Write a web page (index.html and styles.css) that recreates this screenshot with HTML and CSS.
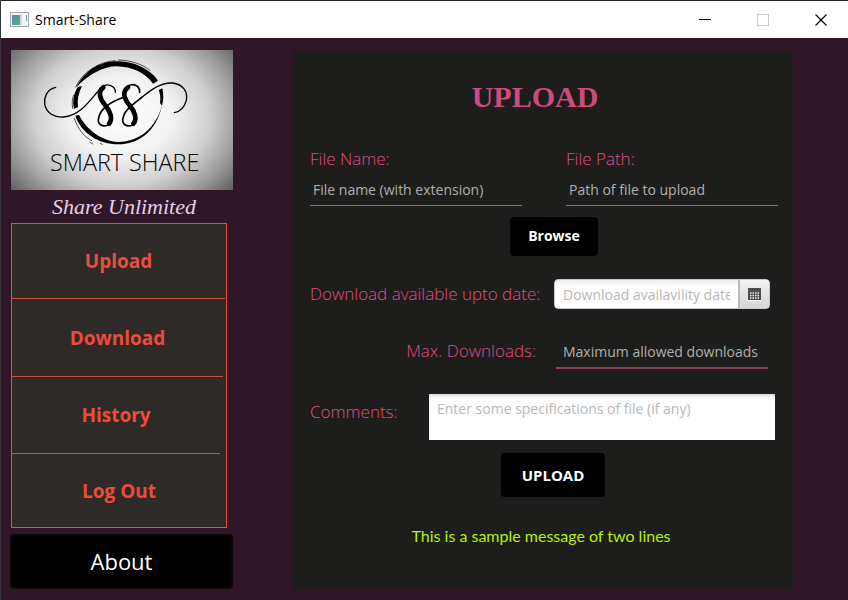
FILE: index.html
```html
<!DOCTYPE html>
<html lang="en">
<head>
<meta charset="utf-8">
<title>Smart-Share</title>
<link rel="stylesheet" href="styles.css">
</head>
<body>
<div class="window">
  <header class="titlebar">
    <svg class="app-icon" width="19" height="15" viewBox="0 0 19 15" aria-hidden="true">
      <defs>
        <linearGradient id="pane" x1="0" y1="0" x2="1" y2="1">
          <stop offset="0" stop-color="#4f87a8"/>
          <stop offset="1" stop-color="#5bb583"/>
        </linearGradient>
      </defs>
      <rect x="0.5" y="0.5" width="18" height="14" fill="#f4f5f7" stroke="#a3a9b0"/>
      <rect x="2" y="3" width="8" height="10" fill="url(#pane)"/>
      <rect x="10" y="2" width="2" height="11" fill="#d5dade"/>
      <rect x="16" y="3" width="1" height="6" fill="#62a59a"/>
    </svg>
    <span class="window-title">Smart-Share</span>
    <div class="window-controls">
      <button type="button" aria-label="Minimize"><svg width="12" height="12" viewBox="0 0 12 12"><path d="M0 5.5H12" stroke="#000"/></svg></button>
      <button type="button" aria-label="Maximize" disabled><svg width="12" height="12" viewBox="0 0 12 12"><rect x="0.5" y="0.5" width="11" height="11" fill="none" stroke="#ccc"/></svg></button>
      <button type="button" aria-label="Close"><svg width="12" height="12" viewBox="0 0 12 12"><path d="M0.5 0.5L11.5 11.5M11.5 0.5L0.5 11.5" stroke="#000" stroke-width="1.1"/></svg></button>
    </div>
  </header>
  <div class="content">
    <aside class="sidebar">
      <svg class="logo" viewBox="-72 -15 666 420" role="img" aria-label="Smart Share logo">
        <defs>
          <radialGradient id="vignette" gradientUnits="userSpaceOnUse" cx="0" cy="0" r="1" gradientTransform="translate(261 185) scale(440 345)">
            <stop offset="0" stop-color="#fff"/>
            <stop offset="0.35" stop-color="#f2f2f2"/>
            <stop offset="0.6" stop-color="#cfcfcf"/>
            <stop offset="0.8" stop-color="#9a9a9a"/>
            <stop offset="1" stop-color="#5c5c5c"/>
          </radialGradient>
        </defs>
        <rect x="-72" y="-15" width="666" height="420" fill="url(#vignette)"/>
        <g fill="#000">
          <path d="M124 98C150 42 200 18 250 19C300 20 347 44 369 77L354 86C330 52 290 35 245 34C205 34 165 58 134 86Z"/>
          <path d="M128 97C116 115 112 140 117 161L129 157C126 135 130 115 141 93Z"/>
          <path d="M121 182C137 232 190 268 250 268C318 266 364 225 381 152C362 218 315 259 250 261C200 258 155 225 132 180Z"/>
          <path d="M371 105L382 100C386 118 386 134 381 152L375 144C378 128 375 116 371 105Z"/>
        </g>
        <g fill="none" stroke="#000" stroke-linecap="round">
          <path stroke-width="2" d="M122 96C142 52 190 20 240 17M250 15C290 16 322 28 345 46M118 190C128 222 148 246 170 257M113 160C110 145 112 130 116 120M165 262L174 267M196 265L202 268"/>
          <path stroke-width="4" d="M62 97C34 103 27 128 29 148C36 177 60 188 85 186C132 183 160 143 188 110C198 94 212 87 225 91C236 95 242 102 241 112"/>
          <path stroke-width="14" d="M205 97C188 110 194 130 209 149C226 168 235 192 222 206"/>
          <path stroke-width="5" d="M220 210C202 218 186 207 191 189C196 160 225 141 268 126"/>
          <path stroke-width="14" d="M279 97C261 110 267 130 282 149C299 168 308 192 295 206"/>
          <path stroke-width="5" d="M280 93C295 83 315 93 314 112M293 210C275 218 259 207 264 189C268 163 298 147 320 127"/>
          <path stroke-width="4" d="M318 129C348 104 378 82 412 84C446 88 459 112 454 136C448 157 436 170 418 173"/>
        </g>
        <text class="logo-text" x="269" y="348" text-anchor="middle">SMART SHARE</text>
      </svg>
      <p class="tagline">Share Unlimited</p>
      <nav class="menu">
        <button type="button">Upload</button>
        <button type="button">Download</button>
        <button type="button">History</button>
        <button type="button">Log Out</button>
      </nav>
      <button type="button" class="about">About</button>
    </aside>
    <main class="panel">
      <h1>UPLOAD</h1>
      <form>
        <div class="file-fields">
          <div class="field">
            <label for="file-name">File Name:</label>
            <input class="line-input" id="file-name" type="text" placeholder="File name (with extension)">
          </div>
          <div class="field">
            <label for="file-path">File Path:</label>
            <input class="line-input" id="file-path" type="text" placeholder="Path of file to upload">
          </div>
        </div>
        <button type="button" class="browse">Browse</button>
        <div class="row date-row">
          <label for="until">Download available upto date:</label>
          <div class="date-picker">
            <input id="until" type="text" placeholder="Download availavility date">
            <button type="button" aria-label="Open calendar">
              <svg width="13" height="13" viewBox="0 0 13 13">
                <rect width="13" height="12" fill="#4c4c4c"/>
                <rect y="12" width="13" height="1" fill="#fff"/>
                <path d="M2 5H12M2 7.5H12M2 10H12" stroke="#eee" stroke-width="1.4" stroke-dasharray="1.5 1"/>
              </svg>
            </button>
          </div>
        </div>
        <div class="row max-row">
          <label for="max">Max. Downloads:</label>
          <input class="line-input" id="max" type="text" placeholder="Maximum allowed downloads">
        </div>
        <div class="row comments-row">
          <label for="comments">Comments:</label>
          <textarea id="comments" placeholder="Enter some specifications of file (if any)"></textarea>
        </div>
        <button type="submit" class="submit">UPLOAD</button>
        <p class="message" role="status">This is a sample message of two lines</p>
      </form>
    </main>
  </div>
</div>
</body>
</html>
```
FILE: styles.css
```css
* {
  box-sizing: border-box;
}

body {
  margin: 0;
  background: #301728;
  font-family: "Open Sans", "Noto Sans", sans-serif;
}

button,
input,
textarea {
  font-family: inherit;
  margin: 0;
}

button {
  padding: 0;
  border: 0;
}

h1,
p {
  margin: 0;
}

.window {
  min-height: 100vh;
  border-top: 1px solid #27272b;
  border-left: 1px solid #35353b;
}

.titlebar {
  display: flex;
  align-items: center;
  height: 37px;
  padding-left: 9px;
  overflow: hidden;
  background: #fff;
}

.window-title {
  flex: 1;
  margin-left: 6px;
  font-size: 14px;
  color: #000;
}

.window-controls {
  display: flex;
  margin-right: -2px;
}

.window-controls button {
  display: grid;
  place-items: center;
  width: 58px;
  height: 37px;
  background: none;
}

.content {
  display: flex;
  gap: 60px;
  padding: 12px 55px 12px 9px;
}

.sidebar {
  flex: none;
  width: 223px;
}

.logo {
  display: block;
  width: 222px;
  margin-left: 1px;
}

.logo-text {
  font-family: "Open Sans", sans-serif;
  font-size: 70px;
  font-weight: 300;
}

.tagline {
  padding: 6px 0 5px 5px;
  font-family: "Liberation Serif", serif;
  font-size: 22px;
  font-style: italic;
  line-height: 22px;
  text-align: center;
  color: #e6cfe0;
}

.menu {
  display: grid;
  grid-template-rows: 75px 78px 77px 73px;
  margin: 0 6px 6px 1px;
  border: 1px solid #ec4c3c;
  background: #2e2a27;
}

.menu button {
  border-bottom: 1px solid #d9483b;
  background: none;
  font-size: 19px;
  font-weight: 700;
  color: #ec4c3c;
}

.menu button:nth-child(1) {
  margin-right: 1px;
}

.menu button:nth-child(2) {
  margin-right: 3px;
}

.menu button:nth-child(3) {
  margin-right: 6px;
}

.menu button:last-child {
  border-bottom: 0;
}

.about {
  display: block;
  width: 100%;
  height: 55px;
  padding-bottom: 2px;
  border: 2px solid #0b080a;
  border-radius: 4px;
  background: #000;
  font-size: 22px;
  color: #fff;
}

.panel {
  flex: 1;
  min-width: 0;
  padding: 26px 15px 40px 17px;
  margin-top: 1px;
  background: #1d1d1b;
}

h1 {
  margin-bottom: 32px;
  padding-right: 18px;
  font-family: "Liberation Serif", serif;
  font-size: 30px;
  line-height: 40px;
  text-align: center;
  color: #cf4a7d;
}

form {
  display: flex;
  flex-direction: column;
}

label {
  font-size: 17px;
  font-weight: 300;
  line-height: 20px;
  color: #e04c87;
}

.file-fields {
  display: grid;
  grid-template-columns: 1fr 1fr;
  gap: 44px;
}

.field {
  display: flex;
  flex-direction: column;
}

.line-input {
  width: 100%;
  height: 37px;
  padding: 6px 3px 1px;
  border: 0;
  border-bottom: 1px solid #cf4a7d;
  background: none;
  font-size: 14px;
  color: #fff;
}

.line-input::placeholder {
  color: #b0b0b0;
}

.browse,
.submit {
  align-self: center;
  border-radius: 4px;
  background: #000;
  font-size: 14px;
  font-weight: 700;
  color: #fff;
}

.browse {
  width: 88px;
  height: 39px;
  padding-bottom: 2px;
  margin: 11px 0 23px 20px;
}

.row {
  display: flex;
  align-items: center;
}

.date-row {
  justify-content: space-between;
  padding-right: 8px;
  white-space: nowrap;
}

.date-picker {
  display: flex;
  width: 216px;
  height: 30px;
  border: 1px solid #c8c8c8;
  border-radius: 4px;
  overflow: hidden;
  background: linear-gradient(#eee, #fff 6px);
}

.date-picker input {
  flex: 1;
  min-width: 0;
  padding: 0 8px;
  border: 0;
  background: none;
  font-size: 14px;
}

.date-picker input::placeholder,
textarea::placeholder {
  color: #b8b8b8;
}

.date-picker button {
  display: grid;
  place-items: center;
  width: 31px;
  border-left: 2px solid #bbb;
  background: linear-gradient(#f2f2f2, #d6d6d6);
}

.max-row {
  justify-content: flex-end;
  gap: 20px;
  margin: 24px 10px 25px 0;
}

.max-row .line-input {
  width: 212px;
  height: 36px;
  padding: 6px 7px 3px;
  border-bottom: 2px solid #8f3a60;
}

.comments-row {
  align-items: flex-start;
  justify-content: space-between;
  padding-right: 3px;
}

.comments-row label {
  padding-top: 8px;
}

textarea {
  width: 346px;
  height: 46px;
  padding: 5px 8px;
  border: 0;
  resize: none;
  background: linear-gradient(#ddd, #fff 5px);
  font-size: 14px;
  line-height: 20px;
}

.submit {
  width: 104px;
  height: 44px;
  margin: 13px 0 29px 18px;
  font-size: 15px;
}

.message {
  padding-right: 6px;
  font-family: Lato, sans-serif;
  font-size: 16px;
  line-height: 20px;
  text-align: center;
  color: #b4f000;
}
```
